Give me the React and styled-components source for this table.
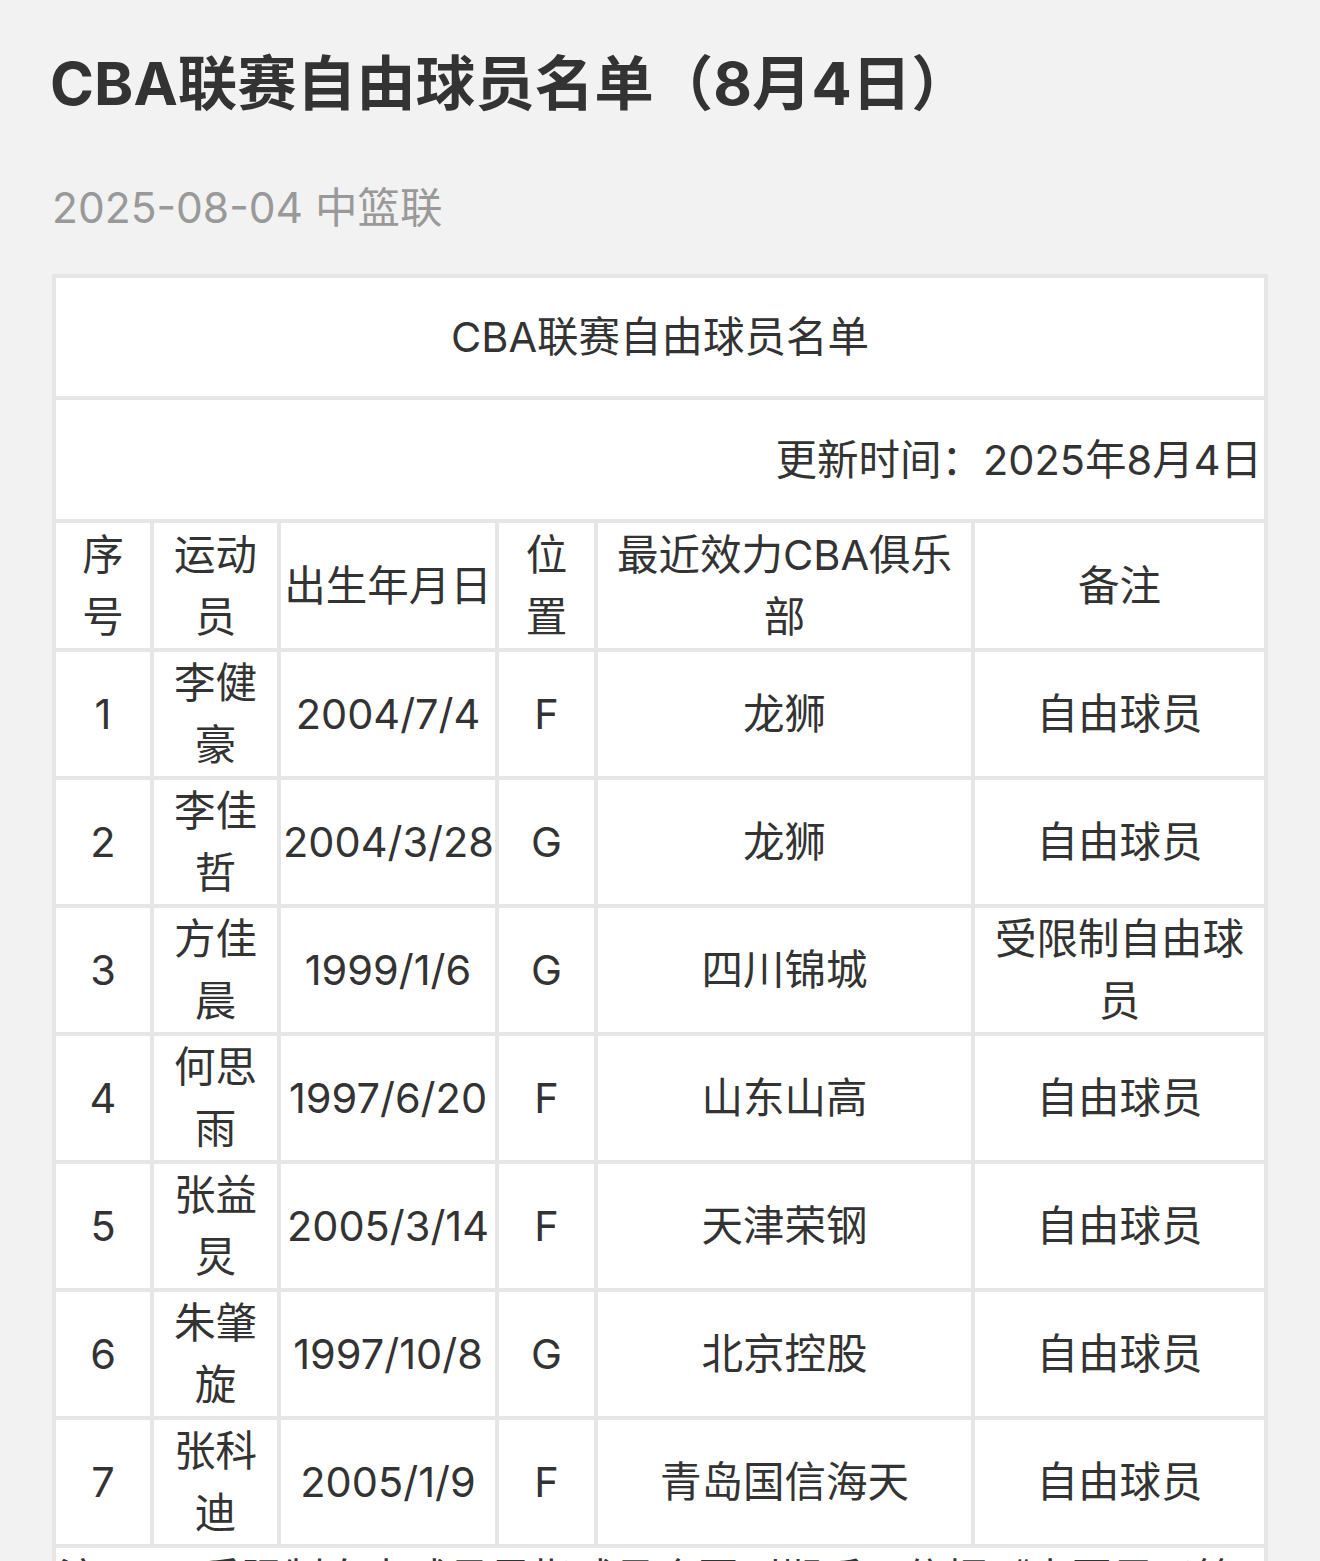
import React from "react";
import styled, { createGlobalStyle } from "styled-components";

const GlobalStyle = createGlobalStyle`
  html, body {
    margin: 0;
    padding: 0;
    background: #f2f2f2;
  }
  body {
    font-family: Inter, "Noto Sans CJK SC", sans-serif;
    color: #333;
  }
`;

const Page = styled.main`
  padding: 43px 52px 0 52px;
  overflow: hidden;
  height: 1561px;
  box-sizing: border-box;
`;

const Title = styled.h1`
  margin: 0;
  font-family: Inter, "Noto Sans CJK SC", sans-serif;
  font-size: 59.5px;
  font-weight: 700;
  line-height: 80px;
  color: #333;
  margin-left: -2px;
`;

const Meta = styled.div`
  margin-top: 55px;
  font-family: Inter, "Noto Sans CJK SC", sans-serif;
  font-size: 42.5px;
  line-height: 60px;
  color: #999;
`;

const Table = styled.table`
  margin-top: 36px;
  width: 1216px;
  table-layout: fixed;
  border-collapse: separate;
  border-spacing: 0;
  border: 2px solid #e6e6e6;
  background: #fff;
  font-family: Inter, "Noto Sans CJK SC", sans-serif;
  font-size: 41.5px;
  line-height: 62px;
  color: #333;
`;

const Col = styled.col`
  width: ${(p) => p.$w}px;
`;

const Cell = styled.td`
  box-sizing: border-box;
  border: 2px solid #e6e6e6;
  padding: ${(p) => p.$padY || 0}px ${(p) => p.$pad ?? 4}px;
  padding-top: ${(p) => (p.$padTop ?? p.$padY ?? 0)}px;
  text-align: ${(p) => p.$align || "center"};
  vertical-align: middle;
  background: #fff;
  word-break: normal;
`;

const columns = [
  { w: 98, pad: 8 },
  { w: 127, pad: 4 },
  { w: 218, pad: 2 },
  { w: 99, pad: 8 },
  { w: 377, pad: 8 },
  { w: 293, pad: 8 },
];

const headers = ["序号", "运动员", "出生年月日", "位置", "最近效力CBA俱乐部", "备注"];

const players = [
  ["1", "李健豪", "2004/7/4", "F", "龙狮", "自由球员"],
  ["2", "李佳哲", "2004/3/28", "G", "龙狮", "自由球员"],
  ["3", "方佳晨", "1999/1/6", "G", "四川锦城", "受限制自由球员"],
  ["4", "何思雨", "1997/6/20", "F", "山东山高", "自由球员"],
  ["5", "张益炅", "2005/3/14", "F", "天津荣钢", "自由球员"],
  ["6", "朱肇旋", "1997/10/8", "G", "北京控股", "自由球员"],
  ["7", "张科迪", "2005/1/9", "F", "青岛国信海天", "自由球员"],
];

export default function App() {
  return (
    <>
      <GlobalStyle />
      <Page>
        <Title>CBA联赛自由球员名单（8月4日）</Title>
        <Meta>2025-08-04 中篮联</Meta>
        <Table>
          <colgroup>
            {columns.map((c, i) => (
              <Col key={i} $w={c.w} />
            ))}
          </colgroup>
          <tbody>
            <tr>
              <Cell colSpan={6} $padY={28}>
                CBA联赛自由球员名单
              </Cell>
            </tr>
            <tr>
              <Cell colSpan={6} $padY={28} $padTop={29} $align="right" $pad={2}>
                更新时间：2025年8月4日
              </Cell>
            </tr>
            <tr>
              {headers.map((h, i) => (
                <Cell key={i} $pad={columns[i].pad} $padTop={1}>
                  {h}
                </Cell>
              ))}
            </tr>
            {players.map((row) => (
              <tr key={row[0]}>
                {row.map((v, i) => (
                  <Cell key={i} $pad={columns[i].pad}>
                    {v}
                  </Cell>
                ))}
              </tr>
            ))}
            <tr>
              <Cell colSpan={6} $align="left" $pad={2}>
                注：1、受限制自由球员是指球员合同到期后，依据《中国男子篮球职业联赛球员转会与交易规定》，原俱乐部享有优先续约权的球员。
              </Cell>
            </tr>
          </tbody>
        </Table>
      </Page>
    </>
  );
}
